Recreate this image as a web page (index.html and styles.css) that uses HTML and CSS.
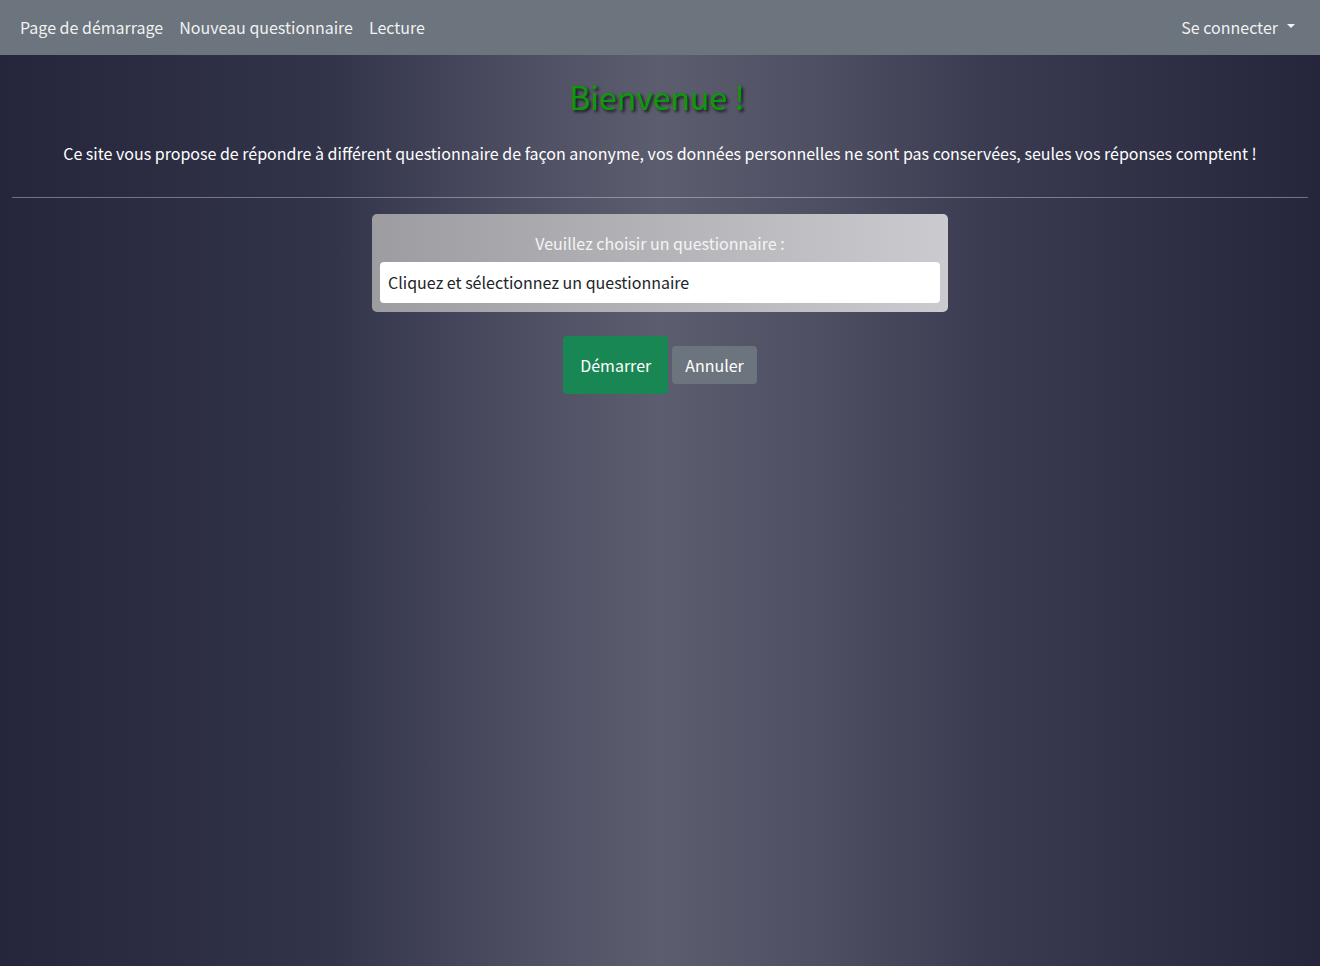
FILE: index.html
```html
<!DOCTYPE html>
<html lang="fr">
<head>
<meta charset="utf-8">
<title>Bienvenue</title>
<link rel="stylesheet" href="styles.css">
</head>
<body>
<nav class="navbar">
  <ul class="nav">
    <li><a class="nav-link" href="#">Page de démarrage</a></li>
    <li><a class="nav-link" href="#">Nouveau questionnaire</a></li>
    <li><a class="nav-link" href="#">Lecture</a></li>
  </ul>
  <div class="nav-right">
    <a class="nav-link dropdown" href="#">Se connecter <span class="caret"></span></a>
  </div>
</nav>
<main class="main">
  <h1 class="title">Bienvenue !</h1>
  <p class="intro">Ce site vous propose de répondre à différent questionnaire de façon anonyme, vos données personnelles ne sont pas conservées, seules vos réponses comptent !</p>
  <hr class="sep">
  <div class="card">
    <label class="card-label">Veuillez choisir un questionnaire :</label>
    <div class="select">Cliquez et sélectionnez un questionnaire</div>
  </div>
  <div class="actions">
    <button class="btn btn-start">Démarrer</button>
    <button class="btn btn-cancel">Annuler</button>
  </div>
</main>
</body>
</html>
```
FILE: styles.css
```css
html, body {
  margin: 0;
  padding: 0;
}
body {
  font-family: "Noto Sans CJK KR", "Noto Sans", sans-serif;
  font-size: 16px;
  line-height: 24px;
  color: #fff;
  min-height: 966px;
  background: linear-gradient(90deg, #25263b 0%, #32344a 25%, #4e4f63 40%, #5c5d6e 50%, #4e4f63 62%, #3a3b50 75%, #25263b 100%);
}
.navbar {
  height: 55px;
  box-sizing: border-box;
  background: #6c757d;
  display: flex;
  align-items: center;
  justify-content: space-between;
  padding: 0 17px 2px 12px;
}
.nav {
  list-style: none;
  margin: 0;
  padding: 0;
  display: flex;
}
.nav-link {
  display: block;
  padding: 8px;
  color: rgba(255,255,255,0.92);
  text-decoration: none;
}
.dropdown {
  display: flex;
  align-items: center;
}
.caret {
  display: inline-block;
  margin-left: 9px;
  margin-top: -2px;
  width: 0;
  height: 0;
  border-left: 4px solid transparent;
  border-right: 4px solid transparent;
  border-top: 4px solid rgba(255,255,255,0.92);
}
.main {
  padding: 0 12px;
  display: flex;
  flex-direction: column;
  align-items: center;
}
.title {
  margin: 19px 0 0 -6px;
  font-size: 32px;
  line-height: 44px;
  font-weight: 400;
  color: #0b9a0b;
  text-shadow: 2px 2px 3px #1a1a1a;
}
.intro {
  margin: 23px 0 0;
  text-align: center;
}
.sep {
  align-self: stretch;
  margin: 32px 0 16px;
  border: 0;
  border-top: 1px solid rgba(255,255,255,0.35);
}
.card {
  width: 576px;
  box-sizing: border-box;
  padding: 17px 8px 9px;
  border-radius: 5px;
  background: linear-gradient(90deg, #9d9da1 0%, #b4b4b8 50%, #cbcbcf 100%);
  display: flex;
  flex-direction: column;
  align-items: stretch;
}
.card-label {
  text-align: center;
  color: #f4f4f4;
  margin-bottom: 7px;
}
.select {
  background: #fff;
  color: #212529;
  border-radius: 4px;
  padding: 8px 8px;
  height: 41px;
  box-sizing: border-box;
  line-height: 25px;
}
.actions {
  margin-top: 24px;
  display: flex;
  align-items: center;
  gap: 4px;
}
.btn {
  font-family: inherit;
  font-size: 16px;
  line-height: 24px;
  border: 0;
  border-radius: 4px;
  color: #fff;
  cursor: pointer;
}
.btn-start {
  background: #198754;
  height: 58px;
  padding: 0 17px;
}
.btn-cancel {
  background: #6c757d;
  height: 38px;
  padding: 0 13px;
}
```
